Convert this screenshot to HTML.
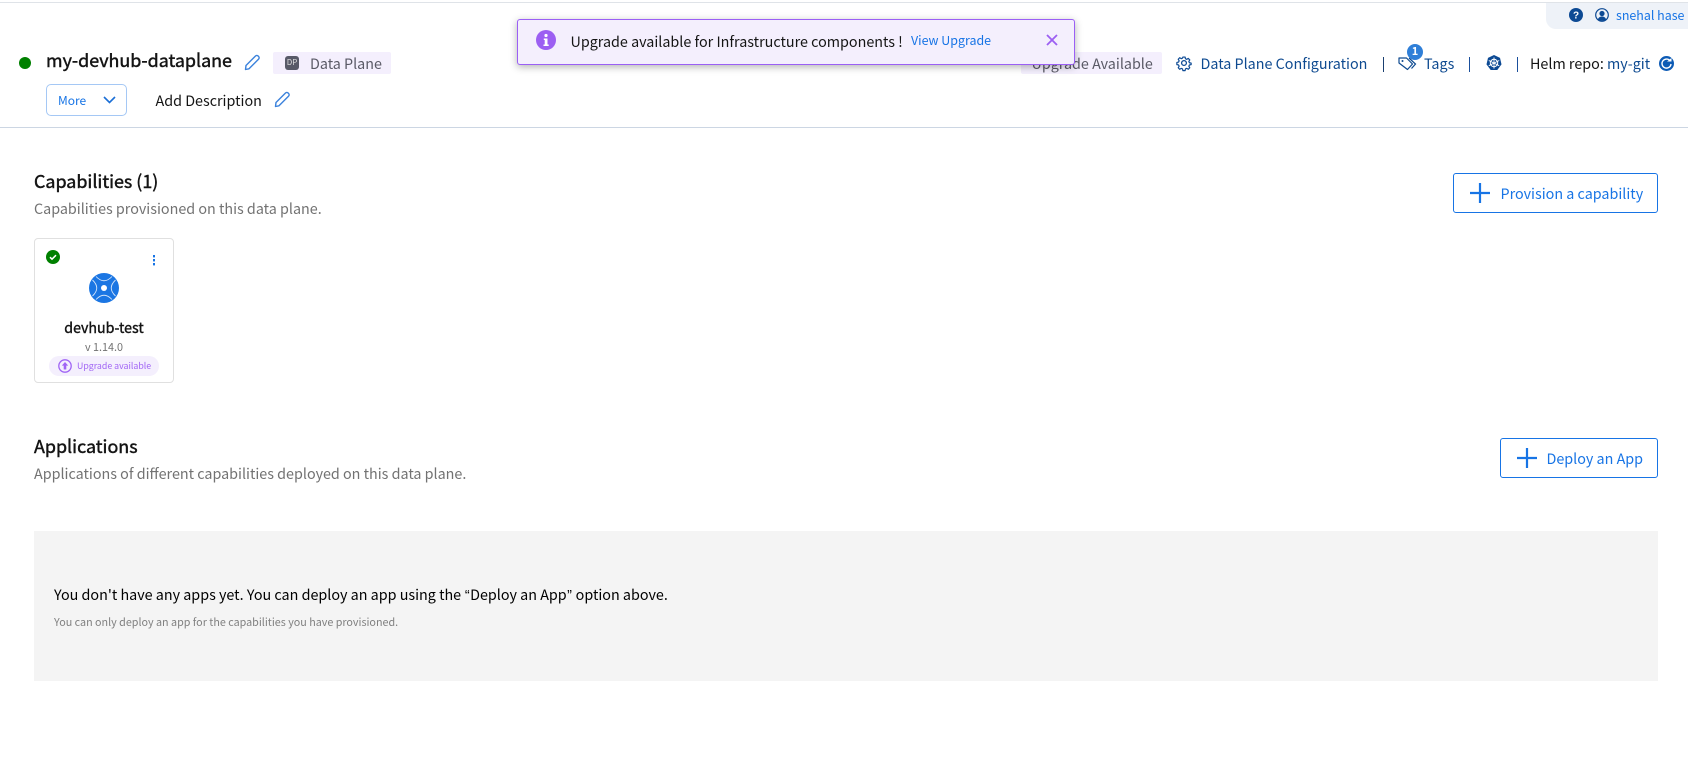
<!DOCTYPE html>
<html>
<head>
<meta charset="utf-8">
<style>
html,body{margin:0;padding:0;background:#fff;width:1688px;height:768px;overflow:hidden}
body{position:relative;font-family:"Noto Sans CJK SC","Liberation Sans",sans-serif}
.a{position:absolute}
.t{position:absolute;white-space:nowrap;line-height:24px;height:24px;font-size:14.33px}
.h{font-size:17.9px;-webkit-text-stroke:.45px currentColor;color:#141414}
.q{font-family:"Liberation Sans",sans-serif;margin:0 .5px}
svg{position:absolute;overflow:visible}
</style>
</head>
<body>
<div class="a" style="left:0;top:2px;width:1688px;height:1px;background:#dfe3e8"></div>
<div class="a" style="left:0;top:127px;width:1688px;height:1px;background:#ccd6e3"></div>

<!-- top right -->
<div class="a" style="left:1546px;top:3px;width:142px;height:26px;background:#eef2f8;border-bottom-left-radius:10px"></div>
<svg style="left:1569px;top:8px" width="14" height="14" viewBox="0 0 14 14"><circle cx="7" cy="7" r="7" fill="#0d4a94"/><text x="7" y="10.500" text-anchor="middle" font-size="10" font-weight="700" fill="#fff" font-family="Liberation Sans">?</text></svg>
<svg style="left:1595px;top:8px" width="14" height="14" viewBox="0 0 14 14"><circle cx="7" cy="7" r="6.300" fill="none" stroke="#0d4a94" stroke-width="1.200"/><circle cx="7" cy="5.500" r="2.600" fill="#0d4a94"/><path d="M2.800 11.500c1-2.400 2.400-3 4.200-3s3.200.6 4.200 3c-2.400 1.900-6 1.900-8.400 0z" fill="#0d4a94"/></svg>
<div class="t" style="left:1616px;top:3px;font-size:12.450px;color:#1774e5">snehal hase</div>

<!-- left header -->
<div class="a" style="left:19px;top:57px;width:12px;height:12px;border-radius:50%;background:#008000"></div>
<div class="t h" style="left:46px;top:48px">my-devhub-dataplane</div>
<svg style="left:243px;top:54px" width="18" height="18" viewBox="0 0 18 18"><path d="M2.500 15.500 3 11.500 12.500 2a1.800 1.800 0 0 1 2.600 0l.5.500a1.800 1.800 0 0 1 0 2.600L6 14.800z" fill="none" stroke="#3b82dc" stroke-width="1.400" stroke-linejoin="round"/></svg>
<div class="a" style="left:273px;top:52px;width:118px;height:22px;background:#f4effd;border-radius:2px"></div>
<div class="a" style="left:285px;top:56px;width:14px;height:14px;background:#585a68;border-radius:3px;color:#ddd;font-size:8px;line-height:13px;text-align:center">DP</div>
<div class="t" style="left:310px;top:52px;color:#5a5a66">Data Plane</div>

<div class="a" style="left:46px;top:84px;width:79px;height:30px;border:1px solid #a5c8f5;border-radius:5px"></div>
<div class="t" style="left:58px;top:89px;font-size:12px;color:#1774e5">More</div>
<svg style="left:103px;top:96px" width="13" height="8" viewBox="0 0 13 8"><path d="M1 1l5.500 5.500L12 1" fill="none" stroke="#1b6fd6" stroke-width="1.600"/></svg>
<div class="t" style="left:155.500px;top:89px;color:#141414">Add Description</div>
<svg style="left:273px;top:91px" width="18" height="18" viewBox="0 0 18 18"><path d="M2.500 15.500 3 11.500 12.500 2a1.800 1.800 0 0 1 2.600 0l.5.500a1.800 1.800 0 0 1 0 2.600L6 14.800z" fill="none" stroke="#3b82dc" stroke-width="1.400" stroke-linejoin="round"/></svg>

<!-- right header -->
<div class="a" style="left:1021px;top:52px;width:141px;height:22px;background:#f4effd;border-radius:2px"></div>
<div class="t" style="left:1031.500px;top:52px;color:#5a5a66">Upgrade Available</div>
<svg style="left:1176px;top:55px" width="16" height="16" viewBox="0 0 16 16"><path d="M6.700 1h2.600l.4 2 1.500.7 1.800-1.100 1.800 1.800-1.100 1.800.7 1.500 2 .4v1.800l-2 .4-.7 1.500 1.100 1.800-1.800 1.800-1.800-1.100-1.500.7-.4 2H6.700l-.4-2-1.500-.7-1.800 1.100-1.800-1.800 1.100-1.800-.7-1.500-2-.4V7.300l2-.4.700-1.500L1.200 3.600 3 1.800l1.800 1.100 1.500-.7z" transform="translate(1.200 1.200) scale(.85)" fill="none" stroke="#0d4a94" stroke-width="1.400" stroke-linejoin="round"/><circle cx="8" cy="8" r="2.400" fill="none" stroke="#0d4a94" stroke-width="1.300"/></svg>
<div class="t" style="left:1200.500px;top:52px;color:#0e4a90">Data Plane Configuration</div>
<div class="a" style="left:1383px;top:57px;width:1px;height:15px;background:#1a3f70"></div>
<svg style="left:1398px;top:55px" width="20" height="16" viewBox="0 0 20 16"><path d="M1 3h7.500l6 6-5 5.500L1 8z" fill="none" stroke="#0e4a90" stroke-width="1.200" stroke-linejoin="round"/><path d="M11 3l6.500 6-4 4.500" fill="none" stroke="#0e4a90" stroke-width="1.200"/><circle cx="4.500" cy="6" r="1" fill="#0e4a90"/></svg>
<div class="a" style="left:1407px;top:44px;width:16px;height:16px;border-radius:50%;background:#2f7fd8;color:#fff;font-size:11px;font-weight:700;line-height:15px;text-align:center">1</div>
<div class="t" style="left:1424px;top:52px;color:#0e4a90">Tags</div>
<div class="a" style="left:1469px;top:57px;width:1px;height:15px;background:#1a4f9c"></div>
<svg style="left:1486px;top:55px" width="16" height="16" viewBox="0 0 16 16"><path d="M8 0l6 2.900 1.500 6.500L11.300 15H4.700L.5 9.400 2 2.900z" fill="#0d4a94"/><circle cx="8" cy="8" r="3.700" fill="none" stroke="#fff" stroke-width="1"/><path d="M8 2.500v11M2.800 5.500l10.400 5.200M13.200 5.500 2.800 10.700" stroke="#fff" stroke-width=".9"/></svg>
<div class="a" style="left:1517px;top:57px;width:1px;height:15px;background:#1a4f9c"></div>
<div class="t" style="left:1530px;top:52px;color:#141414">Helm repo: <span style="color:#0e4a90">my-git</span></div>
<svg style="left:1658.500px;top:55.500px" width="15" height="15" viewBox="0 0 15 15"><circle cx="7.500" cy="7.500" r="7.500" fill="#0d5bb5"/><path d="M11.400 5.300A4.500 4.500 0 1 0 12 8" fill="none" stroke="#fff" stroke-width="1.400"/><path d="M8 5.500h4.500V2z" fill="#fff"/></svg>

<!-- toast -->
<div class="a" style="left:517px;top:19px;width:556px;height:44px;background:#f4effd;border:1px solid #9b5ff5;border-radius:3px;box-shadow:0 2px 8px rgba(0,0,0,.3)"></div>
<svg style="left:536px;top:30px" width="20" height="20" viewBox="0 0 20 20"><circle cx="10" cy="10" r="10" fill="#9c5ff2"/><circle cx="10" cy="5.500" r="1.600" fill="#fff"/><path d="M7.800 8.500H11.500v6h1.200v1.500H7.500v-1.500h1.200v-4.500H7.800z" fill="#fff"/></svg>
<div class="t" style="left:570.500px;top:30px;color:#141414">Upgrade available for Infrastructure components !</div>
<div class="t" style="left:911px;top:28px;font-size:12.450px;color:#1774e5">View Upgrade</div>
<svg style="left:1046px;top:34px" width="12" height="12" viewBox="0 0 12 12"><path d="M1 1l10 10M11 1L1 11" stroke="#9c5ff2" stroke-width="1.800"/></svg>

<!-- capabilities -->
<div class="t h" style="left:34px;top:169px">Capabilities (1)</div>
<div class="t" style="left:34px;top:197px;color:#727272">Capabilities provisioned on this data plane.</div>
<div class="a" style="left:1453px;top:173px;width:203px;height:38px;border:1px solid #1774e5;border-radius:3px"></div>
<svg style="left:1470px;top:183px" width="20" height="20" viewBox="0 0 20 20"><path d="M10 0v20M0 10h20" stroke="#1774e5" stroke-width="2.200"/></svg>
<div class="t" style="left:1500.500px;top:182px;color:#1774e5">Provision a capability</div>

<div class="a" style="left:34px;top:238px;width:138px;height:143px;border:1px solid #e0e0e0;border-radius:4px"></div>
<svg style="left:46px;top:250px" width="14" height="14" viewBox="0 0 14 14"><circle cx="7" cy="7" r="7" fill="#008000"/><path d="M4 7.200l2 2 4-4" fill="none" stroke="#fff" stroke-width="1.500"/></svg>
<svg style="left:152px;top:255px" width="4" height="11" viewBox="0 0 4 11"><rect x="1" y="0" width="2" height="2.400" fill="#1774e5"/><rect x="1" y="4" width="2" height="2.400" fill="#1774e5"/><rect x="1" y="8" width="2" height="2.400" fill="#1774e5"/></svg>
<svg style="left:89px;top:273px" width="30" height="30" viewBox="0 0 30 30"><circle cx="15" cy="15" r="15" fill="#1b76e3"/><circle cx="15" cy="15" r="3" fill="#fff"/><path d="M7 3.500Q15 12 23 3.500M7 26.500Q15 18 23 26.500M3.500 7Q12 15 3.500 23M26.500 7Q18 15 26.500 23" fill="none" stroke="#d5e6fb" stroke-width=".9"/></svg>
<div class="t h" style="left:34px;width:140px;text-align:center;top:316px;font-size:14.200px;-webkit-text-stroke:.4px currentColor">devhub-test</div>
<div class="t" style="left:34px;width:140px;text-align:center;top:335px;font-size:10.800px;color:#727272">v 1.14.0</div>
<div class="a" style="left:49px;top:356px;width:110px;height:20px;border-radius:10px;background:#f4effd"></div>
<svg style="left:58px;top:359px" width="14" height="14" viewBox="0 0 14 14"><circle cx="7" cy="7" r="6.200" fill="none" stroke="#a064f5" stroke-width="1.300"/><path d="M7 3l3.200 3.600H8.300V10.500H5.700V6.600H3.800z" fill="#a064f5"/></svg>
<div class="t" style="left:77px;top:354px;font-size:8.800px;color:#a064f5">Upgrade available</div>

<!-- applications -->
<div class="t h" style="left:34px;top:434px">Applications</div>
<div class="t" style="left:34px;top:462px;color:#727272">Applications of different capabilities deployed on this data plane.</div>
<div class="a" style="left:1500px;top:438px;width:156px;height:38px;border:1px solid #1774e5;border-radius:3px"></div>
<svg style="left:1517px;top:448px" width="20" height="20" viewBox="0 0 20 20"><path d="M10 0v20M0 10h20" stroke="#1774e5" stroke-width="2.200"/></svg>
<div class="t" style="left:1546.500px;top:447px;color:#1774e5">Deploy an App</div>

<div class="a" style="left:34px;top:531px;width:1624px;height:150px;background:#f4f4f4"></div>
<div class="t" style="left:54px;top:583px;color:#000">You don't have any apps yet. You can deploy an app using the <span class="q">“</span>Deploy an App<span class="q">”</span> option above.</div>
<div class="t" style="left:54px;top:611px;font-size:10.760px;color:#808080">You can only deploy an app for the capabilities you have provisioned.</div>
</body>
</html>
